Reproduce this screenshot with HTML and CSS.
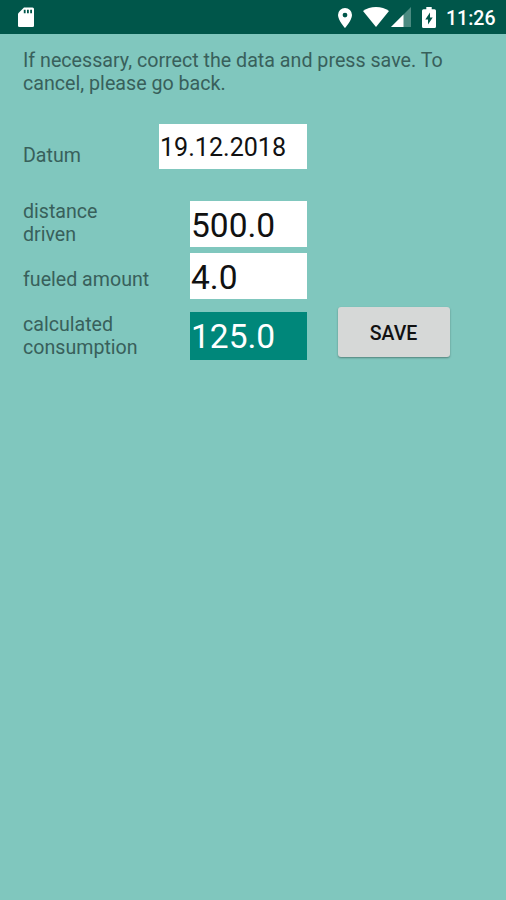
FILE: index.html
```html
<!DOCTYPE html>
<html lang="en">
<head>
<meta charset="utf-8">
<title>Edit entry</title>
<link rel="stylesheet" href="styles.css">
</head>
<body>
<header class="status">
  <svg class="sd" width="16" height="20" viewBox="0 0 16 20"><path fill="#fff" d="M6 .5h8.500q1.500 0 1.500 1.500v17q0 1-1.500 1h-13Q0 20 0 19V6.500z"/><path fill="#00564a" d="M5.800 2.800h1.800v3.400H5.800zM9 2.800h1.800v3.400H9zM12.200 2.800H14v3.400h-1.800z"/></svg>
  <svg class="pin" width="14" height="20" viewBox="0 0 14 20"><path fill="#fff" fill-rule="evenodd" d="M7 0a7 7 0 0 0-7 7c0 5.200 7 13 7 13s7-7.800 7-13a7 7 0 0 0-7-7zm0 4.700a2.400 2.400 0 1 1 0 4.800 2.400 2.400 0 0 1 0-4.800z"/></svg>
  <svg class="wifi" width="26" height="20" viewBox="0 0 26 20"><path fill="#fff" d="M13 20 0 4Q5.500 0 13 0t13 4z"/></svg>
  <svg class="signal" width="20" height="20" viewBox="0 0 20 20"><path fill="#4b8b81" d="M20 0v20H0z"/><path fill="#fff" d="M12.500 7.500V20H0z"/></svg>
  <svg class="battery" width="14" height="21" viewBox="0 0 14 21"><path fill="#fff" d="M4.300 0h5.400v2.200h2.800q1.500 0 1.500 1.500v15.800q0 1.500-1.500 1.500h-11Q0 21 0 19.500V3.700q0-1.500 1.500-1.500h2.800z"/><path fill="#00564a" d="M8 5.500v5h2.700L6 17.500v-5H3.300z"/></svg>
  <span class="clock">11:26</span>
</header>
<main>
  <p class="hint">If necessary, correct the data and press save. To cancel, please go back.</p>
  <div class="row row-date"><label>Datum</label><div class="field date">19.12.2018</div></div>
  <div class="row row-distance"><label class="narrow">distance driven</label><div class="field">500.0</div></div>
  <div class="row row-fuel"><label>fueled amount</label><div class="field">4.0</div></div>
  <div class="row row-result"><label>calculated consumption</label><div class="field result">125.0</div><button class="save">SAVE</button></div>
</main>
</body>
</html>
```
FILE: styles.css
```css
* { box-sizing: border-box; }
body {
  margin: 0;
  min-height: 900px;
  background: #80c7be;
  font-family: Roboto, sans-serif;
  color: #38605b;
}
.status {
  height: 34px;
  display: flex;
  align-items: flex-start;
  background: #00564a;
  padding: 7px 10px 0 18px;
}
.status svg { flex: none; }
.pin { margin-left: 304px; margin-top: 1px; }
.wifi { margin-left: 11px; }
.signal { margin-left: 2px; }
.battery { margin-left: 11px; }
.clock {
  margin-left: 10px;
  font-size: 19.500px;
  font-weight: 500;
  line-height: 23px;
  color: #fff;
}
main { padding: 15px 23px 0; }
.hint {
  margin: 0;
  font-size: 19.660px;
  line-height: 23px;
}
.row {
  display: grid;
  grid-template-columns: 167px 117px 113px;
  align-items: start;
}
label {
  font-size: 19.630px;
  line-height: 23px;
  width: 130px;
}
.narrow { width: 100px; }
.field {
  height: 46px;
  padding-left: 1px;
  background: #fff;
  color: #111;
  font-size: 33.500px;
  line-height: 50px;
}
.row-date {
  grid-template-columns: 136px 148px;
  margin-top: 28.500px;
}
.row-date label { margin-top: 20px; }
.date {
  height: 45px;
  font-size: 25.100px;
  line-height: 47px;
}
.row-distance { margin-top: 32px; }
.row-distance label { margin-top: -1px; }
.row-fuel { margin-top: 6px; }
.row-fuel label { margin-top: 15px; }
.row-result { margin-top: 13px; }
.row-result .field { height: 48px; }
.row-result label { margin-top: 1px; }
.result { background: #00877a; color: #fff; }
.save {
  width: 112px;
  height: 50px;
  margin: -5px 0 0 30.500px;
  padding: 3px 0 0;
  border: 0;
  border-radius: 3px;
  background: #d6d8d7;
  box-shadow: 0 1px 2px rgba(0, 0, 0, .35);
  color: #111;
  font: 500 19.500px Roboto, sans-serif;
}
```
